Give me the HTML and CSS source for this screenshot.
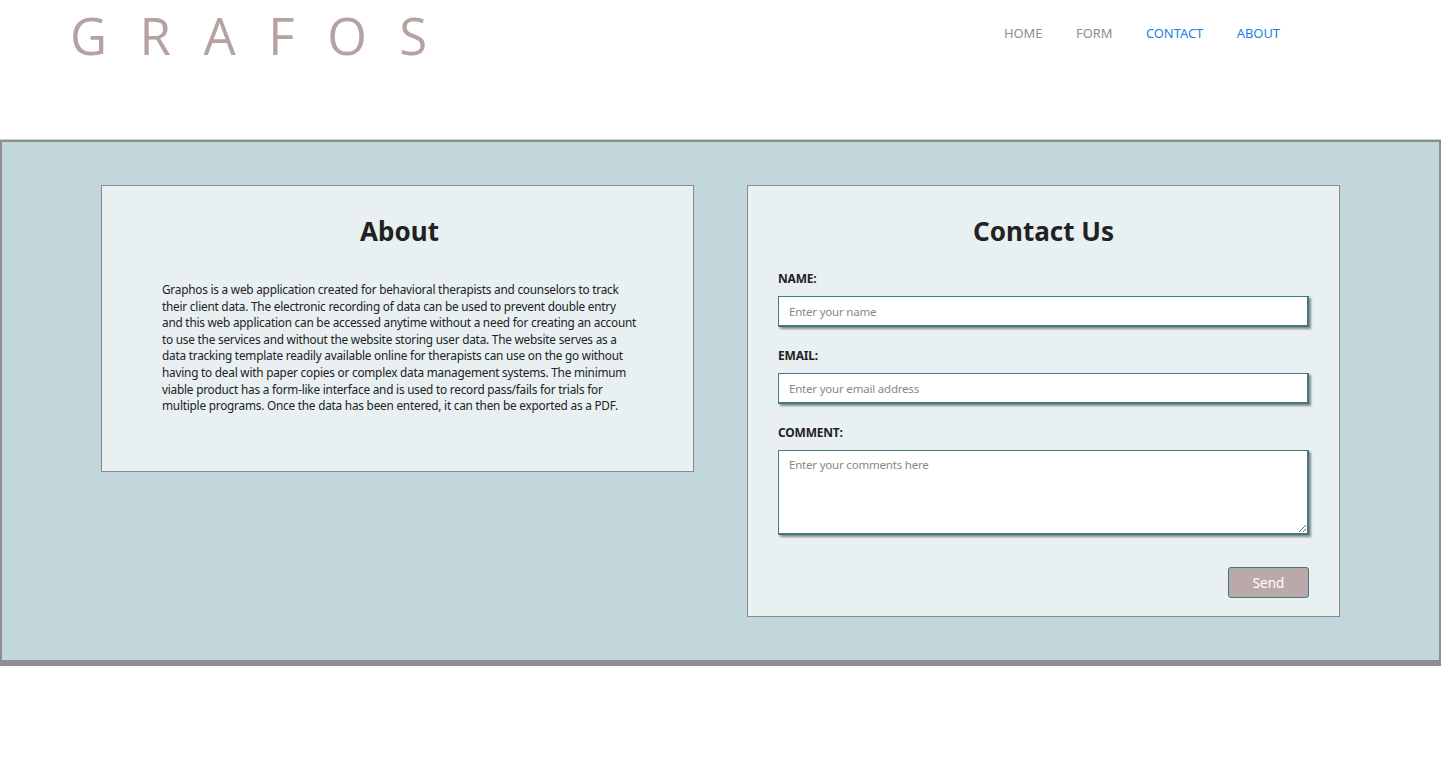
FILE: index.html
```html
<!DOCTYPE html>
<html>
<head>
<meta charset="utf-8">
<link rel="stylesheet" href="styles.css">
</head>
<body>
<header class="header">
  <div class="logo">GRAFOS</div>
  <nav class="nav">
    <a class="nav-link grey" href="#">HOME</a>
    <a class="nav-link grey" href="#">FORM</a>
    <a class="nav-link blue" href="#">CONTACT</a>
    <a class="nav-link blue" href="#">ABOUT</a>
  </nav>
</header>
<main class="main">
  <section class="card about">
    <h2 class="card-title">About</h2>
    <p class="about-text">Graphos is a web application created for behavioral therapists and counselors to track their client data. The electronic recording of data can be used to prevent double entry and this web application can be accessed anytime without a need for creating an account to use the services and without the website storing user data. The website serves as a data tracking template readily available online for therapists can use on the go without having to deal with paper copies or complex data management systems. The minimum viable product has a form-like interface and is used to record pass/fails for trials for multiple programs. Once the data has been entered, it can then be exported as a PDF.</p>
  </section>
  <section class="card contact">
    <h2 class="card-title">Contact Us</h2>
    <form class="form">
      <label class="label">NAME:</label>
      <input class="field" type="text" placeholder="Enter your name">
      <label class="label">EMAIL:</label>
      <input class="field" type="text" placeholder="Enter your email address">
      <label class="label">COMMENT:</label>
      <textarea class="field area" placeholder="Enter your comments here"></textarea>
      <div class="actions"><button class="send" type="button">Send</button></div>
    </form>
  </section>
</main>
</body>
</html>
```
FILE: styles.css
```css
html, body {
  margin: 0;
  padding: 0;
  background: #ffffff;
  font-family: "Noto Sans", "Open Sans", sans-serif;
}
.header {
  height: 140px;
  display: flex;
  justify-content: space-between;
  align-items: flex-start;
  box-sizing: border-box;
  border-bottom: 1px solid #cfcfcf;
}
.logo {
  margin-left: 70px;
  margin-top: 1px;
  font-family: "Open Sans", sans-serif;
  font-size: 51px;
  letter-spacing: 32.5px;
  color: #b7a2a2;
  line-height: 68px;
  font-weight: 400;
}
.nav {
  display: flex;
  gap: 33.5px;
  margin-right: 161px;
  margin-top: 24px;
}
.nav-link {
  font-family: "Noto Sans", sans-serif;
  font-size: 12.9px;
  text-decoration: none;
  line-height: 18px;
}
.grey { color: #8c8c8c; }
.blue { color: #1a7fe6; }
.main {
  background: #c1d7dc;
  border: 2px solid #8e8e8e;
  border-bottom: 6px solid #8e8e8e;
  display: flex;
  align-items: flex-start;
  gap: 53px;
  padding: 43px 99px 43px 99px;
  height: 432px;
}
.card {
  background: #e8f0f2;
  border: 1px solid #8a8a8a;
  width: 593px;
  box-sizing: border-box;
}
.about {
  height: 287px;
  padding: 27px 56px 0 60px;
}
.contact {
  height: 432px;
  padding: 27px 30px 0 30px;
}
.card-title {
  margin: 0;
  text-align: center;
  font-size: 26px;
  font-weight: 700;
  color: #222;
  line-height: 36px;
}
.about-text {
  margin: 32px 0 0 0;
  font-size: 11.8px;
  line-height: 16.6px;
  color: #222;
  letter-spacing: -0.22px;
}
.form {
  display: flex;
  flex-direction: column;
  margin-top: 22px;
}
.label {
  font-size: 12px;
  font-weight: 700;
  color: #222;
  line-height: 16px;
  margin-bottom: 9px;
  letter-spacing: -0.2px;
}
.field {
  width: 531px;
  height: 31px;
  box-sizing: border-box;
  border: 2px solid #3e7a80;
  border-left-width: 1px;
  border-top-width: 1px;
  box-shadow: 2px 2px 2px #8a8a8a;
  background: #fff;
  padding: 0 10px;
  font-family: "Noto Sans", sans-serif;
  font-size: 11.5px;
  letter-spacing: -0.2px;
  color: #333;
  margin-bottom: 21px;
  outline: none;
}
.field::placeholder { color: #888; }
.area {
  height: 85px;
  padding-top: 6px;
  resize: vertical;
  margin-bottom: 32px;
}
.actions {
  display: flex;
  justify-content: flex-end;
  width: 531px;
}
.send {
  width: 81px;
  height: 31px;
  background: #bba9a9;
  border: 1px solid #3e7a80;
  border-radius: 3px;
  color: #fff;
  font-family: "Noto Sans", sans-serif;
  font-size: 13.5px;
  padding: 0;
}
```
